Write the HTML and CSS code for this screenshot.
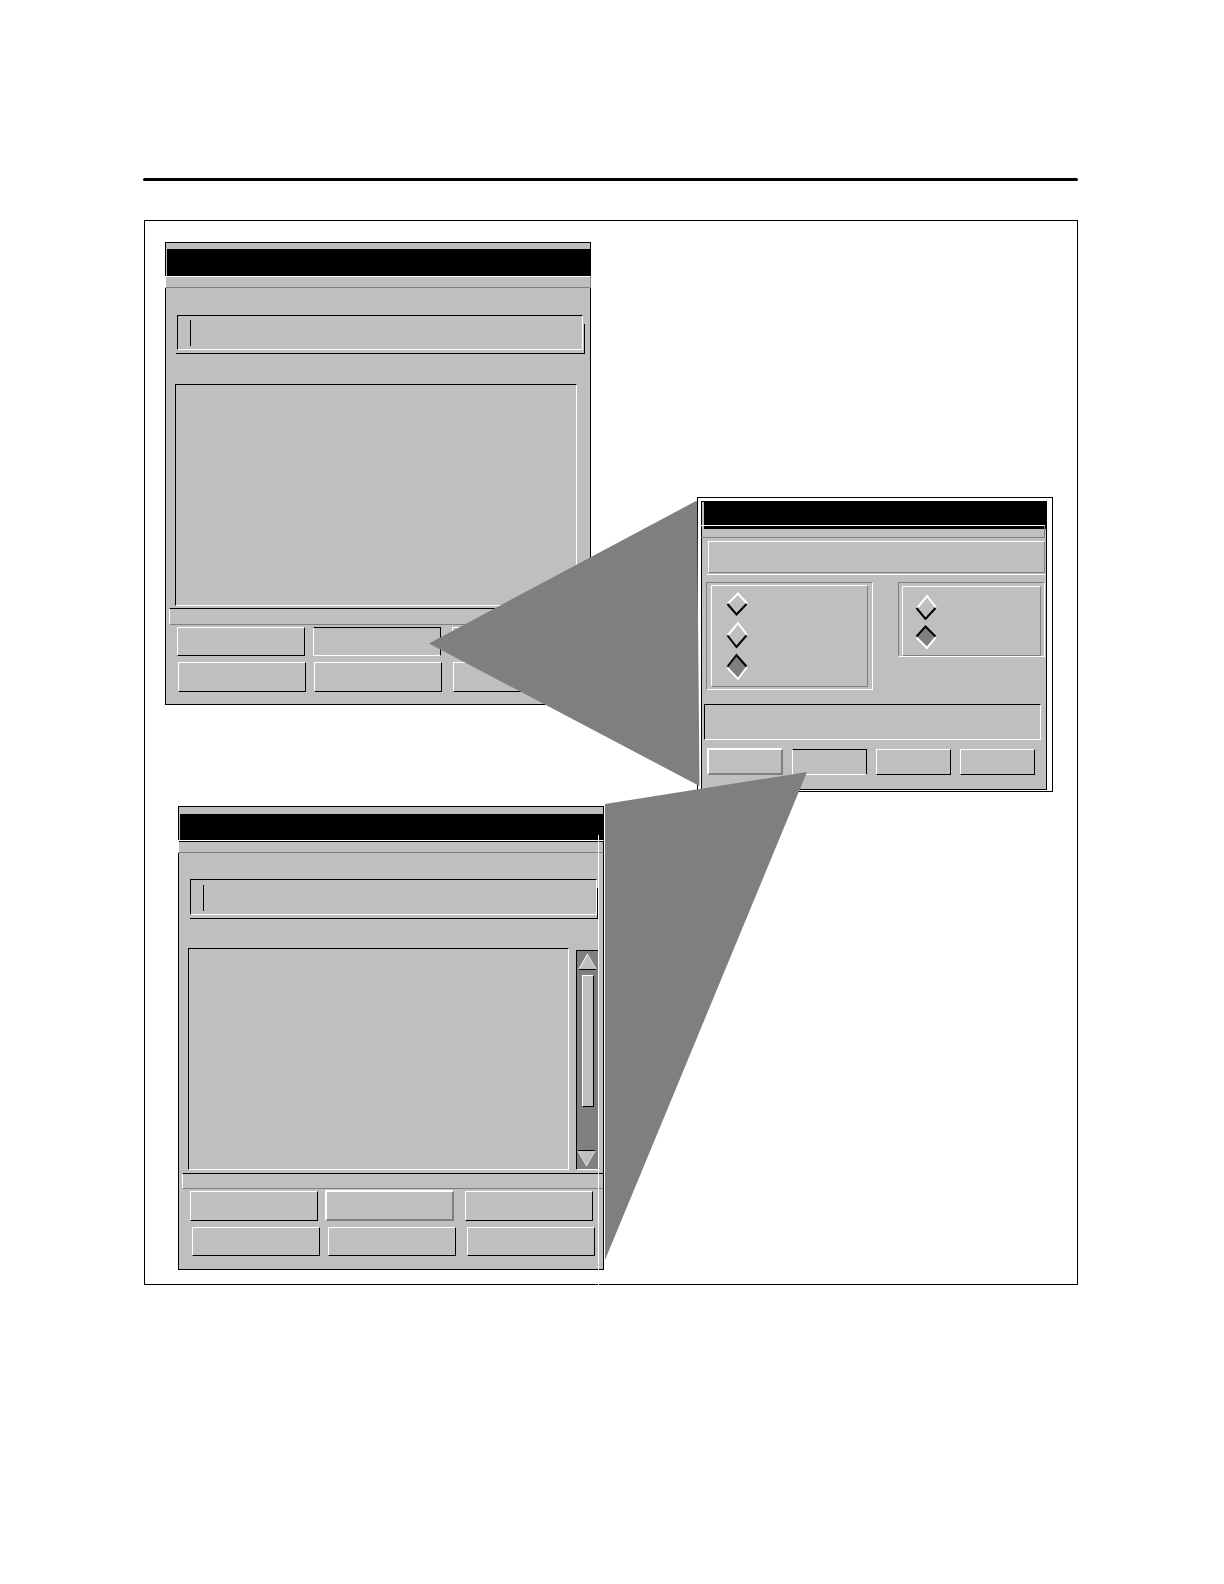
FILE: index.html
```html
<!DOCTYPE html>
<html lang="en">
<head>
<meta charset="utf-8">
<title>Dialog windows</title>
<link rel="stylesheet" href="styles.css">
</head>
<body>
<main class="page">
  <hr class="rule">
  <div class="canvas">

    <section class="window window-first" aria-label="First dialog">
      <div class="titlebar"></div>
      <div class="menubar"></div>
      <div class="entry"><input class="entry-input" type="text" aria-label="Entry"></div>
      <div class="body-row"><div class="list"></div></div>
      <div class="divider"></div>
      <div class="buttons">
        <button class="btn" type="button" aria-label="Action 1"></button>
        <button class="btn pressed" type="button" aria-label="Action 2"></button>
        <button class="btn" type="button" aria-label="Action 3"></button>
      </div>
      <div class="buttons buttons-lower">
        <button class="btn" type="button" aria-label="Action 4"></button>
        <button class="btn" type="button" aria-label="Action 5"></button>
        <button class="btn" type="button" aria-label="Action 6"></button>
      </div>
    </section>

    <section class="window window-last" aria-label="Second dialog">
      <div class="titlebar"></div>
      <div class="menubar"></div>
      <div class="entry"><input class="entry-input" type="text" aria-label="Entry"></div>
      <div class="body-row">
        <div class="list"></div>
        <div class="scrollbar">
          <svg class="arrow" width="19" height="18" viewBox="0 0 19 18" aria-hidden="true">
            <path d="M9.500 1 18 16H1z" fill="#bfbfbf"/>
            <path d="M1 16 9.500 1" stroke="#fff" fill="none"/>
            <path d="M9.500 1 18 16" stroke="#dedede" fill="none"/>
            <path d="M1 16.500H18" stroke="#000" fill="none"/>
          </svg>
          <div class="thumb"></div>
          <svg class="arrow arrow-down" width="19" height="18" viewBox="0 0 19 18" aria-hidden="true">
            <path d="M1 1H18L9.500 16z" fill="#bfbfbf"/>
            <path d="M1 1 9.500 16 18 1" stroke="#dedede" fill="none"/>
            <path d="M1 .5H18" stroke="#000" fill="none"/>
          </svg>
        </div>
      </div>
      <div class="divider"></div>
      <div class="buttons">
        <button class="btn" type="button" aria-label="Action 1"></button>
        <button class="btn raised" type="button" aria-label="Action 2"></button>
        <button class="btn" type="button" aria-label="Action 3"></button>
      </div>
      <div class="buttons buttons-lower">
        <button class="btn" type="button" aria-label="Action 4"></button>
        <button class="btn" type="button" aria-label="Action 5"></button>
        <button class="btn" type="button" aria-label="Action 6"></button>
      </div>
    </section>

    <section class="options" aria-label="Options dialog">
      <div class="options-inner">
        <div class="options-title"></div>
        <div class="options-menu"></div>
        <div class="prompt"><div class="prompt-box"></div></div>
        <div class="groups">
          <fieldset class="group group-wide">
            <div class="group-inner">
              <label class="choice"><input type="radio" name="kind" aria-label="Kind 1">
                <svg width="22" height="26" fill="none" stroke-width="2" aria-hidden="true"><path d="M2 12.500 12 2.500 21 12.500" stroke="#fff"/><path d="M1.500 13 10.500 23.500 20.500 13" stroke="#000"/></svg></label>
              <label class="choice"><input type="radio" name="kind" aria-label="Kind 2">
                <svg width="22" height="28" fill="none" stroke-width="2" aria-hidden="true"><path d="M2 14 12 2 21 14" stroke="#fff"/><path d="M1.500 14.500 10.500 26 20.500 14.500" stroke="#000"/></svg></label>
              <label class="choice"><input type="radio" name="kind" aria-label="Kind 3" checked>
                <svg width="22" height="28" fill="none" stroke-width="2" aria-hidden="true"><path d="M1.500 14 10.500 2 21 14 12 26z" fill="#7f7f7f"/><path d="M1.500 15 12 26 21 14" stroke="#fff"/><path d="M1.500 13.500 10.500 2 20.500 13.500" stroke="#000"/></svg></label>
            </div>
          </fieldset>
          <fieldset class="group group-narrow">
            <div class="group-inner">
              <label class="choice"><input type="radio" name="mode" aria-label="Mode 1">
                <svg width="22" height="26" fill="none" stroke-width="2" aria-hidden="true"><path d="M2 14 12 2 21 13.500" stroke="#fff"/><path d="M1.500 14 10.500 25 20.500 14" stroke="#000"/></svg></label>
              <label class="choice"><input type="radio" name="mode" aria-label="Mode 2" checked>
                <svg width="22" height="26" fill="none" stroke-width="2" aria-hidden="true"><path d="M1.500 13 10.500 2 21 13 12 24z" fill="#7f7f7f"/><path d="M1.500 13.500 12 24 21 13" stroke="#fff"/><path d="M1.500 12.500 10.500 2.500 20.500 12.500" stroke="#000"/></svg></label>
            </div>
          </fieldset>
        </div>
        <div class="status"></div>
        <div class="options-buttons">
          <button class="btn raised" type="button" aria-label="Option action 1"></button>
          <button class="btn pressed" type="button" aria-label="Option action 2"></button>
          <button class="btn" type="button" aria-label="Option action 3"></button>
          <button class="btn" type="button" aria-label="Option action 4"></button>
        </div>
      </div>
    </section>

    <svg class="callouts" aria-hidden="true">
      <g fill="#7f7f7f">
        <path d="M284 422.500 551 280H552L554.500 565z"/>
        <path d="M460 583 662 551 460 1039z"/>
      </g>
    </svg>
    <div class="guide"></div>
  </div>
</main>
</body>
</html>
```
FILE: styles.css
```css
:root {
  --face: #bfbfbf;
  --shade: #7f7f7f;
}

* { box-sizing: border-box; }

body {
  margin: 0;
  background: #fff;
  font-family: "Liberation Sans", sans-serif;
}

.page { padding: 178px 146px 120px 144px; }

.rule {
  height: 3px;
  margin: 0 0 39px -1px;
  border: 0;
  border-radius: 2px;
  background: #000;
}

/* Free canvas holding the three overlapping windows */
.canvas {
  position: relative;
  min-height: 1065px;
  border: 1px solid #000;
}

.window {
  position: absolute;
  width: 426px;
  border: 1px solid #000;
  background: var(--face);
}

.window-first { left: 20px; top: 21px; padding: 6px 0 12px; }
.window-last { left: 33px; top: 585px; padding: 7px 0 13px; box-shadow: 1px 0 0 #fff; }

.titlebar {
  height: 27px;
  margin: 0 -1px 0 1px;
  background: #000;
}

.menubar {
  height: 12px;
  margin: 0 -1px;
  border: 1px solid var(--shade);
  border-top-color: #fff;
  border-left-color: #fff;
  background: var(--face);
}

.window-last .titlebar { height: 26px; }
.window-last .menubar { height: 13px; box-shadow: inset 0 1px 0 #000; border-right-color: #000; }

.entry {
  position: relative;
  margin: 27px 5px 0 10px;
  padding: 0 2px 3px 1px;
  border-bottom: 1px solid #000;
}

.entry::after {
  content: "";
  position: absolute;
  top: 9px;
  right: 0;
  bottom: 0;
  width: 1px;
  background: #000;
}

.entry-input {
  display: block;
  width: 100%;
  height: 35px;
  padding: 0 16px;
  border: 1px solid #fff;
  border-top-color: #000;
  border-left-color: #000;
  border-radius: 0;
  outline: 0;
  background: linear-gradient(#000, #000) 12px 4px / 1px 26px no-repeat;
}

.window-last .entry { margin: 26px 5px 0 11px; padding: 0 1px 3px 0; }
.window-last .entry-input { height: 36px; background-position: 12px 5px; }

.body-row {
  display: flex;
  align-items: flex-end;
  gap: 7px;
  margin: 30px 13px 0 9px;
}

.window-last .body-row { margin: 29px 4px 0 9px; }

.list {
  flex: 1;
  height: 222px;
  border: 1px solid #fff;
  border-top-color: #000;
  border-left-color: #000;
}

.scrollbar {
  display: flex;
  flex-direction: column;
  align-items: center;
  width: 23px;
  height: 220px;
  padding-top: 2px;
  border: 1px solid #fff;
  border-top-color: #000;
  border-left-color: #000;
  background: var(--shade);
}

.thumb {
  width: 12px;
  height: 132px;
  margin-top: 4px;
  border: 1px solid #000;
  border-top-color: #fff;
  border-left-color: #fff;
  background: var(--face);
}

.arrow-down { margin: auto 2px 1px 0; }

.divider {
  height: 17px;
  margin: 2px 0 0 3px;
  border-top: 1px solid #000;
  border-bottom: 1px solid var(--shade);
  border-left: 1px solid #fff;
}

.window-last .divider { height: 16px; margin-top: 3px; }

.buttons {
  display: grid;
  grid-template-columns: 136px 139px 128px;
  margin: 2px 0 0 11px;
}

.buttons .btn { width: 128px; height: 29px; }
.buttons-lower { margin: 6px 0 0 12px; }
.buttons-lower .btn { height: 30px; }
.window-last .btn { height: 30px; }
.window-last .buttons-lower { margin-left: 13px; }
.window-last .buttons-lower .btn { height: 29px; }

.btn {
  padding: 0;
  border: 1px solid #000;
  border-top-color: #fff;
  border-left-color: #fff;
  border-radius: 0;
  background: var(--face);
}

.btn.pressed { border-color: #000 #000 #fff #fff; }

.btn.raised {
  border-width: 1px 2px 2px 1px;
  border-color: #fff var(--shade) var(--shade) #fff;
  box-shadow: -1px -1px 0 #fff;
}

/* Options window: white mat around the dialog */
.options {
  position: absolute;
  left: 552px;
  top: 276px;
  width: 356px;
  padding: 3px 5px 1px 3px;
  border: 1px solid #000;
  background: #fff;
}

.options-inner {
  padding-bottom: 14px;
  border: 1px solid #000;
  background: var(--face);
}

.options-title { height: 27px; margin-left: 2px; background: #000; }

.options-menu {
  height: 13px;
  margin: -4px 1px 0 -1px;
  border: 1px solid var(--shade);
  border-top-color: #fff;
  border-left: 0;
}

.prompt {
  margin: 3px 1px 0 5px;
  padding: 0 0 1px 1px;
  border-bottom: 1px solid #fff;
}

.prompt-box {
  height: 32px;
  border: 1px solid var(--shade);
  border-top-color: #fff;
  border-left-color: #fff;
}

.groups {
  display: flex;
  align-items: flex-start;
  justify-content: space-between;
  margin: 7px 1px 0 4px;
}

.group {
  min-width: 0;
  margin: 0;
  border: 1px solid #fff;
  border-top-color: var(--shade);
  border-left-color: var(--shade);
}

.group-wide { width: 167px; padding: 2px 4px; }
.group-narrow { width: 147px; padding: 3px 3px 0; }

.group-inner {
  display: flex;
  flex-direction: column;
  gap: 4px;
  height: 102px;
  padding: 5px 0 0 14px;
  border: 1px solid var(--shade);
  border-top-color: #fff;
  border-left-color: #fff;
}

.group-narrow .group-inner { height: 70px; padding: 7px 0 0 12px; }

.choice { position: relative; display: block; width: 22px; }
.choice svg { display: block; }

.choice input {
  position: absolute;
  inset: 0;
  width: 100%;
  height: 100%;
  margin: 0;
  opacity: 0;
}

.status {
  height: 36px;
  margin: 14px 5px 0 2px;
  border: 1px solid #fff;
  border-top-color: #000;
  border-left-color: #000;
}

.options-buttons {
  display: grid;
  grid-template-columns: repeat(4, 75px);
  justify-content: space-between;
  margin: 9px 11px 0 6px;
}

.options-buttons .btn { height: 26px; }

.callouts {
  position: absolute;
  inset: 0;
  width: 100%;
  height: 100%;
  pointer-events: none;
}

.guide {
  position: absolute;
  top: 614px;
  bottom: -1px;
  left: 453px;
  width: 1px;
  background: #fff;
}
```
